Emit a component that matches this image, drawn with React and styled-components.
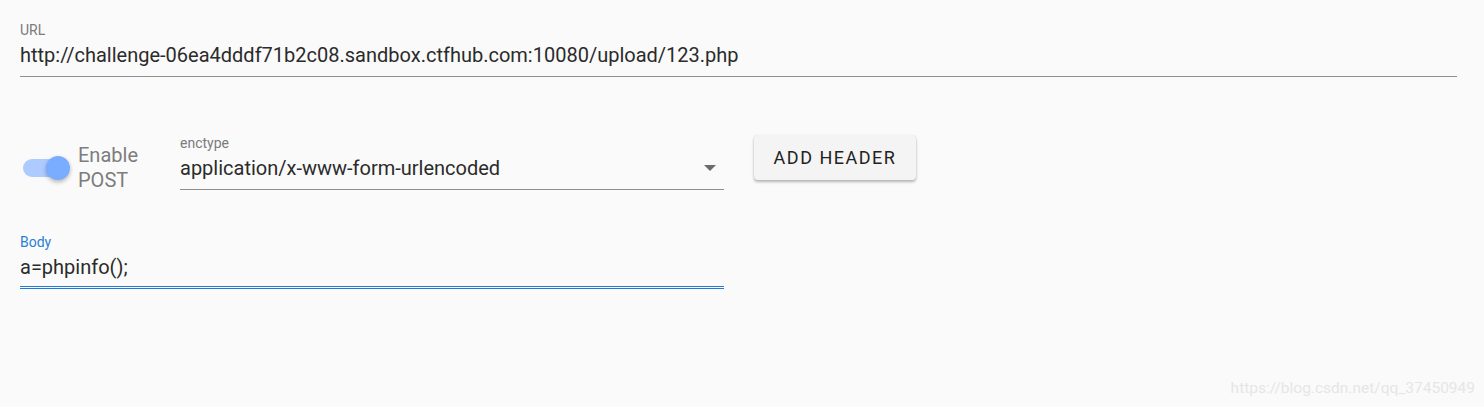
import React from "react";
import styled, { createGlobalStyle } from "styled-components";

const GlobalStyle = createGlobalStyle`
  html, body {
    margin: 0;
    padding: 0;
    background: #fafafa;
    font-family: Roboto, "Liberation Sans", Arial, sans-serif;
  }
`;

const Page = styled.div`
  position: relative;
  width: 1484px;
  height: 407px;
  box-sizing: border-box;
  padding: 22px 27px 0 20px;
  background: #fafafa;
`;

const Field = styled.div`
  display: flex;
  flex-direction: column;
  width: ${(props) => props.$width || "100%"};
  border-bottom: 1px solid
    ${(props) => (props.$focused ? "#1f7ad8" : "#8f8f8f")};
  box-shadow: ${(props) =>
    props.$focused ? "0 1px 0 #fafafa, 0 2px 0 #1f7ad8" : "none"};
  box-sizing: border-box;
  padding-bottom: ${(props) => (props.$focused ? "6px" : "8px")};
`;

const Label = styled.label`
  font-size: 14px;
  line-height: 16px;
  color: ${(props) => (props.$focused ? "#2a7fd4" : "#7a7a7a")};
`;

const Value = styled.div`
  font-size: 20px;
  line-height: 26px;
  color: #2b2b2b;
  margin-top: 4px;
  white-space: nowrap;
`;

const Row = styled.div`
  display: flex;
  align-items: flex-start;
  margin-top: 58px;
`;

const SwitchGroup = styled.div`
  display: flex;
  align-items: center;
  width: 160px;
  margin-top: 8px;
`;

const Track = styled.div`
  position: relative;
  width: 40px;
  height: 18px;
  margin-left: 3px;
  border-radius: 9px;
  background: #aecbff;
`;

const Thumb = styled.div`
  position: absolute;
  right: -7px;
  top: -3px;
  width: 24px;
  height: 24px;
  border-radius: 50%;
  background: #7aacff;
  box-shadow: 0 2px 4px rgba(0, 0, 0, 0.28);
`;

const SwitchLabel = styled.div`
  margin-left: 15px;
  font-size: 20px;
  line-height: 25px;
  color: #7d7d7d;
`;

const SelectValue = styled(Value)`
  display: flex;
  align-items: center;
  justify-content: space-between;
`;

const Arrow = styled.span`
  width: 0;
  height: 0;
  margin-right: 8px;
  border-left: 6px solid transparent;
  border-right: 6px solid transparent;
  border-top: 6px solid #6b6b6b;
`;

const Button = styled.button`
  margin-left: 30px;
  width: 162px;
  height: 45px;
  padding: 0;
  border: none;
  border-radius: 4px;
  background: #f4f4f4;
  box-shadow: 0 2px 3px rgba(0, 0, 0, 0.28), 0 0 1px rgba(0, 0, 0, 0.12);
  font-family: Roboto, "Liberation Sans", Arial, sans-serif;
  font-size: 18px;
  font-weight: 400;
  letter-spacing: 1.5px;
  color: #222;
`;

const BodyWrap = styled.div`
  margin-top: 41px;
`;

const Watermark = styled.div`
  position: absolute;
  right: 9px;
  bottom: 10px;
  font-size: 15.5px;
  color: #e6e6e6;
`;

const App = () => {
  return (
    <>
      <GlobalStyle />
      <Page>
        <Field>
          <Label>URL</Label>
          <Value>
            http://challenge-06ea4dddf71b2c08.sandbox.ctfhub.com:10080/upload/123.php
          </Value>
        </Field>
        <Row>
          <SwitchGroup>
            <Track>
              <Thumb />
            </Track>
            <SwitchLabel>
              Enable
              <br />
              POST
            </SwitchLabel>
          </SwitchGroup>
          <Field $width="544px">
            <Label>enctype</Label>
            <SelectValue>
              application/x-www-form-urlencoded
              <Arrow />
            </SelectValue>
          </Field>
          <Button>ADD HEADER</Button>
        </Row>
        <BodyWrap>
          <Field $width="704px" $focused>
            <Label $focused>Body</Label>
            <Value>a=phpinfo();</Value>
          </Field>
        </BodyWrap>
        <Watermark>https://blog.csdn.net/qq_37450949</Watermark>
      </Page>
    </>
  );
};

export default App;
